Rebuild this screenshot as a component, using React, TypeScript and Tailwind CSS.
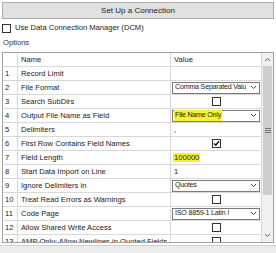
import React from 'react';

type Row = {
    n: number;
    name: string;
    kind: 'empty' | 'select' | 'check' | 'text';
    value?: string;
    checked?: boolean;
    mark?: boolean;
};

const rows: Row[] = [
    { n: 1, name: 'Record Limit', kind: 'empty' },
    { n: 2, name: 'File Format', kind: 'select', value: 'Comma Separated Valu' },
    { n: 3, name: 'Search SubDirs', kind: 'check' },
    { n: 4, name: 'Output File Name as Field', kind: 'select', value: 'File Name Only', mark: true },
    { n: 5, name: 'Delimiters', kind: 'text', value: ',' },
    { n: 6, name: 'First Row Contains Field Names', kind: 'check', checked: true },
    { n: 7, name: 'Field Length', kind: 'text', value: '100000', mark: true },
    { n: 8, name: 'Start Data Import on Line', kind: 'text', value: '1' },
    { n: 9, name: 'Ignore Delimiters in', kind: 'select', value: 'Quotes' },
    { n: 10, name: 'Treat Read Errors as Warnings', kind: 'check' },
    { n: 11, name: 'Code Page', kind: 'select', value: 'ISO 8859-1 Latin I' },
    { n: 12, name: 'Allow Shared Write Access', kind: 'check' },
    { n: 13, name: 'AMP Only: Allow Newlines in Quoted Fields', kind: 'check' },
];

const Chevron = () => (
    <svg width="7" height="5" viewBox="0 0 7 5" className="shrink-0">
        <path d="M1 1 L3.5 3.5 L6 1" fill="none" stroke="#444" strokeWidth="1" />
    </svg>
);

const Box = ({ checked }: { checked?: boolean }) => (
    <div className="w-[9px] h-[9px] border border-[#333] bg-white flex items-center justify-center">
        {checked && (
            <svg width="7" height="7" viewBox="0 0 7 7">
                <path d="M1 3.5 L2.8 5.3 L6 1.3" fill="none" stroke="#111" strokeWidth="1.4" />
            </svg>
        )}
    </div>
);

const Value = ({ row }: { row: Row }) => {
    if (row.kind === 'select') {
        return (
            <div className="mx-[1px] h-[12px] border border-[#7a7a7a] bg-white flex items-center justify-between pl-[2px] pr-[2px] gap-[1px]">
                <span className={'whitespace-nowrap overflow-hidden text-[7.1px] tracking-[-0.2px] ' + (row.mark ? 'bg-[#f7f232] px-[1px] -ml-[1px]' : '')}>{row.value}</span>
                <Chevron />
            </div>
        );
    }
    if (row.kind === 'check') {
        return (
            <div className="flex justify-center">
                <Box checked={row.checked} />
            </div>
        );
    }
    if (row.kind === 'text') {
        return (
            <div className="pl-[3px]">
                <span className={row.mark ? 'bg-[#f7f232] px-[1px] -ml-[1px]' : ''}>{row.value}</span>
            </div>
        );
    }
    return null;
};

export default function App() {
    return (
        <div className="w-[276px] h-[253px] bg-white overflow-hidden text-[7.6px] text-[#1a1a1a] flex flex-col" style={{ fontFamily: '"Liberation Sans", Arial, sans-serif' }}>
            <div className="mx-[2px] mt-[2px] h-[17px] shrink-0 border border-[#adadad] bg-[#e1e1e1] flex items-center justify-center text-[8px]">
                Set Up a Connection
            </div>

            <div className="flex items-center gap-[4px] ml-[2px] mt-[4px] h-[10px] shrink-0">
                <div className="w-[9px] h-[9px] border border-[#333] bg-white" />
                <span>Use Data Connection Manager (DCM)</span>
            </div>

            <div className="ml-[3px] mt-[5px] h-[10px] shrink-0 flex items-center text-[#333]">Options</div>

            <div className="ml-[2px] mr-[2px] mt-[4px] border border-[#a0a0a0] flex h-[191px] shrink-0 overflow-hidden">
                <div className="flex-1 flex flex-col overflow-hidden">
                    <div className="flex h-[14px] shrink-0 border-b border-[#d8d8d8]">
                        <div className="w-[15px] border-r border-[#d8d8d8]" />
                        <div className="w-[153px] border-r border-[#d8d8d8] pl-[3px] flex items-center">Name</div>
                        <div className="flex-1 pl-[3px] flex items-center">Value</div>
                    </div>
                    {rows.map((r) => (
                        <div key={r.n} className="flex h-[14px] shrink-0 border-b border-[#d8d8d8]">
                            <div className="w-[15px] border-r border-[#d8d8d8] pl-[2px] flex items-center">{r.n}</div>
                            <div className="w-[153px] border-r border-[#d8d8d8] pl-[3px] flex items-center whitespace-nowrap overflow-hidden">{r.name}</div>
                            <div className="flex-1 min-w-0 flex flex-col justify-center overflow-hidden">
                                <Value row={r} />
                            </div>
                        </div>
                    ))}
                </div>
                <div className="w-[12px] shrink-0 border-l border-[#d8d8d8] bg-[#f0f0f0] flex flex-col">
                    <div className="h-[13px] flex items-center justify-center">
                        <svg width="7" height="5" viewBox="0 0 7 5">
                            <path d="M1 4 L3.5 1.5 L6 4" fill="none" stroke="#606060" strokeWidth="1" />
                        </svg>
                    </div>
                    <div className="mx-[1px] h-[129px] bg-[#cdcdcd] flex items-center justify-center">
                        <div className="w-[6px] flex flex-col gap-[1px]">
                            <div className="h-[1px] bg-[#777]" />
                            <div className="h-[1px] bg-[#777]" />
                            <div className="h-[1px] bg-[#777]" />
                        </div>
                    </div>
                    <div className="flex-1" />
                    <div className="h-[13px] flex items-center justify-center">
                        <svg width="7" height="5" viewBox="0 0 7 5">
                            <path d="M1 1 L3.5 3.5 L6 1" fill="none" stroke="#606060" strokeWidth="1" />
                        </svg>
                    </div>
                </div>
            </div>

            <div className="flex-1 mt-[2px] bg-[#ececec] border-t border-[#d0d0d0]" />
        </div>
    );
}
